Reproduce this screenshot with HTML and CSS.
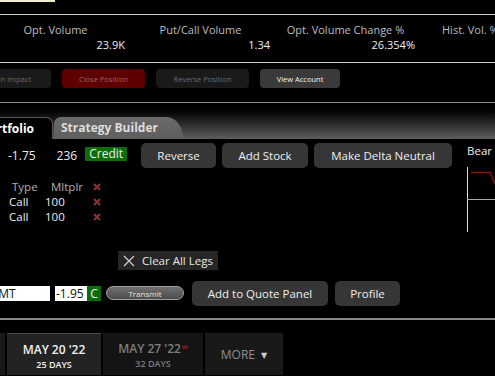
FILE: index.html
```html
<!DOCTYPE html>
<html lang="en">
<head>
  <meta charset="UTF-8" />
  <title>Strategy Builder</title>
  <link rel="stylesheet" href="styles.css">
</head>
<body>

  <div class="top"><div class="hl"></div></div>

  <div class="stats">
    <div class="stat"><span class="lbl">Opt. Volume</span><span class="val">23.9K</span></div>
    <div class="stat"><span class="lbl">Put/Call Volume</span><span class="val">1.34</span></div>
    <div class="stat"><span class="lbl">Opt. Volume Change %</span><span class="val">26.354%</span></div>
    <div class="stat last"><span class="lbl">Hist. Vol. %</span><span class="val"></span></div>
  </div>

  <div class="actions">
    <button class="sm dim first">Margin Impact</button>
    <button class="sm red">Close Position</button>
    <button class="sm dim">Reverse Position</button>
    <button class="sm on">View Account</button>
  </div>

  <div class="tabbar">
    <div class="tab active">Portfolio</div>
    <div class="tab">Strategy Builder</div>
  </div>

  <div class="main">
    <div class="left">
      <div class="row1">
        <span class="num">-1.75</span>
        <span class="qty">236</span>
        <span class="credit">Credit</span>
        <button class="btn rev">Reverse</button>
        <button class="btn">Add Stock</button>
        <button class="btn">Make Delta Neutral</button>
      </div>

      <div class="legs">
        <span class="hd t">Type</span><span class="hd m">Mltplr</span><svg class="x" viewBox="0 0 8 8"><path d="M1 1L7 7M7 1L1 7"/></svg>
        <span>Call</span><span class="c">100</span><svg class="x" viewBox="0 0 8 8"><path d="M1 1L7 7M7 1L1 7"/></svg>
        <span>Call</span><span class="c">100</span><svg class="x" viewBox="0 0 8 8"><path d="M1 1L7 7M7 1L1 7"/></svg>
      </div>

      <div class="clear">
        <svg width="12" height="12" viewBox="0 0 12 12"><path d="M1 1L11 11M11 1L1 11" stroke="#ccc" stroke-width="1.3"/></svg>
        Clear All Legs
      </div>

      <div class="order">
        <span class="field sym">LMT</span>
        <span class="field px">-1.95</span><span class="cbox">C</span>
        <button class="transmit">Transmit</button>
        <button class="btn quote">Add to Quote Panel</button>
        <button class="btn">Profile</button>
      </div>
    </div>

    <div class="right">
      <div class="bear">Bear</div>
      <svg class="chart" width="28" height="66" viewBox="0 0 28 66">
        <line x1="0.5" y1="0" x2="0.5" y2="65" stroke="#ddd" stroke-width="1"/>
        <line x1="0" y1="32.5" x2="28" y2="32.5" stroke="#aaa" stroke-width="1"/>
        <polyline points="4,5.5 23,5.5 28,17" fill="none" stroke="#8c1414" stroke-width="1.3"/>
      </svg>
    </div>
  </div>

  <div class="sep"></div>

  <div class="dates">
    <div class="date edge"></div>
    <div class="date cur"><b>MAY 20 '22</b><small>25 DAYS</small></div>
    <div class="date"><b>MAY 27 '22<sup>w</sup></b><small>32 DAYS</small></div>
    <div class="date more">MORE <span class="tri">&#9660;</span></div>
  </div>

</body>
</html>
```

FILE: styles.css
```css
* { box-sizing: border-box; }

body {
  margin: 0;
  background: #000;
  color: #eee;
  font-family: 'Open Sans', 'DejaVu Sans', sans-serif;
  font-size: 11px;
  width: 495px;
  height: 376px;
  overflow: hidden;
}

button {
  font-family: inherit;
  border: none;
  cursor: pointer;
}

.top {
  height: 15px;
  border-bottom: 1px solid #c8c8c8;
}

.top .hl {
  width: 55px;
  height: 2px;
  background: #efecce;
}

.stats {
  display: grid;
  grid-template-columns: repeat(4, 145px);
  margin-left: -17px;
  height: 48px;
  padding-top: 7px;
  border-bottom: 1px solid #c8c8c8;
}

.stat {
  display: flex;
  flex-direction: column;
  line-height: 15px;
  padding-right: 3px;
}

.stat .lbl {
  text-align: center;
  color: #bdbdbd;
  white-space: nowrap;
  padding-left: 3px;
}

.stat.last .lbl {
  text-align: left;
  padding-left: 24px;
}

.stat .val {
  text-align: right;
  color: #f0f0f0;
  height: 15px;
}

.actions {
  display: flex;
  gap: 11px;
  height: 40px;
  padding-top: 6px;
  border-bottom: 1px solid #8a8a8a;
}

.sm {
  height: 19px;
  border-radius: 4px;
  font-size: 7.5px;
  padding: 0;
}

.sm.first { width: 90px; margin-left: -39px; }
.sm.red { width: 83px; background: #5e0000; color: #a06060; }
.sm.dim { width: 93px; background: #1a1a1a; color: #6a6a6a; }
.sm.dim.first { width: 90px; }
.sm.on { width: 80px; background: #3a3a3a; color: #f2f2f2; }

.tabbar {
  display: flex;
  align-items: flex-end;
  height: 36px;
  background: linear-gradient(#000 0%, #050505 25%, #5e5e5e 100%);
}

.tab {
  flex-shrink: 0;
  height: 22px;
  line-height: 21px;
  font-weight: bold;
  font-size: 12px;
  white-space: nowrap;
}

.tab.active {
  width: 94px;
  background: #000;
  color: #fff;
  margin-left: -41px;
  padding-right: 18px;
  text-align: right;
  border-top-right-radius: 7px;
  border-top: 1px solid #555;
  border-right: 1px solid #555;
}

.tab:not(.active) {
  width: 129px;
  background: linear-gradient(#6a6a6a, #5e5e5e);
  color: #dcdcdc;
  padding-left: 7px;
  margin-left: 1px;
  border-top-left-radius: 7px;
  border-top-right-radius: 16px 22px;
}

.main {
  display: flex;
}

.left {
  width: 459px;
  padding-top: 4px;
}

.row1 {
  display: flex;
  align-items: center;
  height: 25px;
  font-size: 12px;
}

.row1 .num { margin-left: 8px; }
.row1 .qty { margin-left: 21px; }

.credit {
  margin-left: 8px;
  background: #0b6e0b;
  padding: 0 4px;
  line-height: 14px;
  margin-top: -4px;
}

.btn {
  height: 25px;
  background: #363636;
  color: #eee;
  border-radius: 5px;
  font-size: 11.5px;
  padding: 0 12px;
  margin-left: 6px;
  white-space: nowrap;
}

.btn.rev { margin-left: 14px; width: 75px; }
.row1 .btn:nth-of-type(2) { width: 86px; }
.row1 .btn:nth-of-type(3) { width: 138px; }

.legs {
  display: grid;
  grid-template-columns: 36px 48px 10px;
  grid-auto-rows: 15px;
  align-items: center;
  margin: 11px 0 0 9px;
  line-height: 15px;
  font-size: 11.5px;
}

.legs .hd { color: #b0b0b0; }
.legs .t { padding-left: 3px; }
.legs .m { padding-left: 6px; }

.legs .x {
  width: 8px;
  height: 8px;
  stroke: #8a3434;
  stroke-width: 2;
}

.clear {
  display: flex;
  align-items: center;
  gap: 7px;
  width: 100px;
  height: 19px;
  margin: 27px 0 0 118px;
  padding-left: 5px;
  background: #262626;
  color: #e6e6e6;
  font-size: 11.5px;
}

.order {
  display: flex;
  align-items: center;
  height: 24px;
  margin-top: 11px;
}

.field {
  background: #fff;
  color: #111;
  height: 15px;
  line-height: 15px;
  font-size: 12px;
}

.field.sym { width: 60px; margin-left: -10px; padding-left: 2px; }
.field.px { width: 32px; margin-left: 5px; padding-left: 1px; }

.cbox {
  width: 14px;
  height: 15px;
  line-height: 15px;
  text-align: center;
  background: #0b6e0b;
  color: #eee;
  font-size: 12px;
}

.transmit {
  width: 78px;
  height: 14px;
  margin-left: 5px;
  border: 1px solid #a0a0a0;
  border-radius: 8px;
  background: linear-gradient(#707070, #4c4c4c);
  color: #e4e4e4;
  font-size: 8px;
  padding: 0;
}

.btn.quote { width: 136px; margin-left: 8px; }
.order .btn:last-child { width: 65px; margin-left: 7px; }

.right {
  padding: 5px 0 0 8px;
}

.bear {
  line-height: 14px;
  font-size: 11.5px;
}

.chart {
  display: block;
  margin-top: 9px;
}

.sep {
  height: 2px;
  background: #8a8a8a;
  margin-top: 13px;
}

.dates {
  display: flex;
  gap: 2px;
  margin-top: 13px;
  height: 42px;
}

.date {
  width: 100px;
  background: #141414;
  color: #7e7e7e;
  display: flex;
  flex-direction: column;
  align-items: center;
  padding-top: 7px;
}

.date b {
  font-weight: 600;
  font-size: 12px;
  line-height: 17px;
}

.date small {
  font-size: 9px;
  font-weight: 600;
  line-height: 13px;
}

.date sup {
  color: #a02020;
  font-size: 7px;
  line-height: 0;
  vertical-align: 4px;
  margin-left: 1px;
}

.date.edge { width: 5px; background: #181818; }

.date.cur {
  width: 94px;
  background: #232323;
  color: #f2f2f2;
  border-top: 1px solid #4a4a4a;
}

.date.more {
  width: 78px;
  background: #191919;
  flex-direction: row;
  justify-content: center;
  gap: 6px;
  padding-top: 0;
  align-items: center;
  font-size: 12px;
  color: #8e8e8e;
}

.tri {
  color: #ccc;
  font-size: 8px;
}
```
